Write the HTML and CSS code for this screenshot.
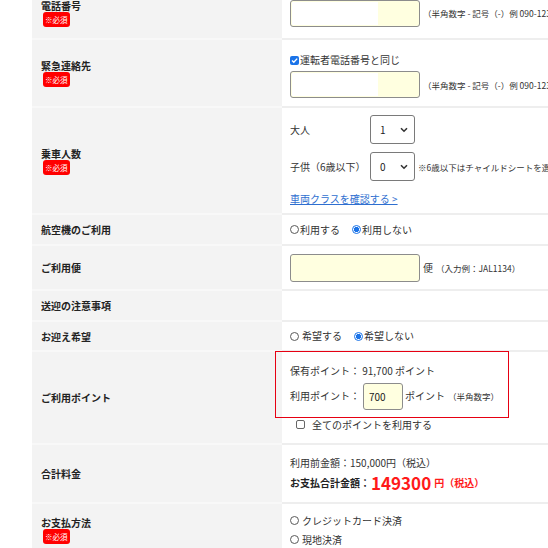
FILE: index.html
```html
<!DOCTYPE html>
<html lang="ja">
<head>
<meta charset="utf-8">
<title>予約フォーム</title>
<link rel="stylesheet" href="styles.css">
</head>
<body>
<div class="page">
  <div class="form">
    <div class="row r1">
      <div class="th"><div class="label">電話番号</div><span class="req">※必須</span></div>
      <div class="td">
        <div class="line"><span class="input tel"><span class="mask"></span></span><span class="hint">（半角数字 - 記号（-）例 090-1234-5678）</span></div>
      </div>
    </div>
    <div class="row r2">
      <div class="th"><div class="label">緊急連絡先</div><span class="req">※必須</span></div>
      <div class="td pad-top">
        <div class="line"><span class="check on"></span><span>運転者電話番号と同じ</span></div>
        <div class="line gap4"><span class="input tel"><span class="mask"></span></span><span class="hint">（半角数字 - 記号（-）例 090-1234-5678）</span></div>
      </div>
    </div>
    <div class="row r3">
      <div class="th"><div class="label">乗車人数</div><span class="req">※必須</span></div>
      <div class="td">
        <div class="line"><span class="pax">大人</span><span class="select">1<svg class="chev" width="8" height="6" viewBox="0 0 8 6"><path d="M1 1.2 L4 4.2 L7 1.2" fill="none" stroke="#333" stroke-width="1.6"/></svg></span></div>
        <div class="line gap8"><span class="pax">子供（6歳以下）</span><span class="select">0<svg class="chev" width="8" height="6" viewBox="0 0 8 6"><path d="M1 1.2 L4 4.2 L7 1.2" fill="none" stroke="#333" stroke-width="1.6"/></svg></span><span class="hint tight">※6歳以下はチャイルドシートを選択してください</span></div>
        <div class="line gap11"><a class="link" href="#">車両クラスを確認する &gt;</a></div>
      </div>
    </div>
    <div class="row r4">
      <div class="th"><div class="label">航空機のご利用</div></div>
      <div class="td">
        <div class="line"><span class="radio"></span><span class="opt">利用する</span><span class="radio on"></span><span>利用しない</span></div>
      </div>
    </div>
    <div class="row r5">
      <div class="th"><div class="label">ご利用便</div></div>
      <div class="td">
        <div class="line"><span class="input flight"></span><span class="bin">便</span><span class="hint">（入力例：JAL1134）</span></div>
      </div>
    </div>
    <div class="row r6">
      <div class="th"><div class="label">送迎の注意事項</div></div>
      <div class="td"></div>
    </div>
    <div class="row r7">
      <div class="th"><div class="label">お迎え希望</div></div>
      <div class="td">
        <div class="line"><span class="radio sp"></span><span class="opt2">希望する</span><span class="radio on"></span><span>希望しない</span></div>
      </div>
    </div>
    <div class="row r8">
      <div class="th"><div class="label">ご利用ポイント</div></div>
      <div class="td">
        <div class="highlight"></div>
        <div class="line">保有ポイント： 91,700 ポイント</div>
        <div class="line gap5"><span>利用ポイント：</span><span class="input points">700</span><span class="pt">ポイント</span><span class="hint">（半角数字）</span></div>
        <div class="line gap8 indent"><span class="check"></span><span>全てのポイントを利用する</span></div>
      </div>
    </div>
    <div class="row r9">
      <div class="th"><div class="label">合計料金</div></div>
      <div class="td">
        <div class="line">利用前金額：150,000円（税込）</div>
        <div class="line total"><b>お支払合計金額：</b><span class="amount">149300</span><span class="yen">円（税込）</span></div>
      </div>
    </div>
    <div class="row r10">
      <div class="th"><div class="label">お支払方法</div><span class="req">※必須</span></div>
      <div class="td">
        <div class="line pay"><span class="radio sp"></span><span>クレジットカード決済</span></div>
        <div class="line pay"><span class="radio sp"></span><span>現地決済</span></div>
      </div>
    </div>
  </div>
</div>
</body>
</html>
```

FILE: styles.css
```css
html, body {
  margin: 0;
  padding: 0;
  background: #fff;
  overflow: hidden;
}
body {
  font-family: "Noto Sans CJK JP", "Noto Sans", sans-serif;
  font-size: 10px;
  color: #333;
}
.page {
  width: 548px;
  height: 548px;
  overflow: hidden;
}
.form {
  width: 720px;
  margin-left: 32px;
  margin-top: -12px;
}
.row {
  display: grid;
  grid-template-columns: 250px 1fr;
}
.th {
  background: #f3f3f3;
  border-bottom: 2px solid #f8f8f8;
  padding-left: 9px;
  display: flex;
  flex-direction: column;
  justify-content: center;
  align-items: flex-start;
}
.td {
  position: relative;
  border-bottom: 2px solid #eeeeee;
  padding-left: 8px;
  display: flex;
  flex-direction: column;
  justify-content: center;
}
.r1 { height: 52px; }
.r2 { height: 68px; }
.r3 { height: 107px; }
.r4 { height: 31px; }
.r5 { height: 45px; }
.r6 { height: 31px; }
.r7 { height: 30px; }
.r8 { height: 93px; }
.r9 { height: 59px; }
.r10 { height: 54px; }

.label {
  font-weight: bold;
  color: #222;
  line-height: 13px;
}
.req {
  display: inline-block;
  margin-left: 2px;
  background: #ff0000;
  color: #fff;
  font-size: 7.5px;
  line-height: 15px;
  height: 15px;
  padding: 0 2px;
  border-radius: 3px;
}
.pad-top { padding-top: 5px; }
.line {
  display: flex;
  align-items: center;
  line-height: 14px;
  white-space: nowrap;
}
.gap4 { margin-top: 4px; }
.gap5 { margin-top: 5px; }
.gap8 { margin-top: 8px; }
.gap11 { margin-top: 11px; }
.indent { padding-left: 6px; }

.input {
  display: inline-block;
  box-sizing: border-box;
  background: #ffffe0;
  border: 1px solid #8c8c8c;
  border-radius: 3px;
  position: relative;
  overflow: hidden;
}
.input.tel {
  width: 130px;
  height: 27px;
}
.mask {
  position: absolute;
  left: 1px;
  top: 1px;
  bottom: 1px;
  width: 86px;
  background: #fff;
}
.input.flight {
  width: 130px;
  height: 28px;
}
.input.points {
  width: 40px;
  height: 27px;
  margin-left: 3px;
  padding-left: 5px;
  line-height: 25px;
  color: #222;
}
.hint {
  font-size: 8.5px;
  margin-left: 3px;
  color: #333;
}
.hint.tight { margin-left: 3px; }
.bin { margin-left: 3px; }
.pt { margin-left: 2px; }

.pax {
  display: inline-block;
  width: 80px;
}
.select {
  box-sizing: border-box;
  display: inline-flex;
  align-items: center;
  justify-content: space-between;
  width: 45px;
  height: 29px;
  padding: 0 6px 0 9px;
  border: 1px solid #7a7a7a;
  border-radius: 3px;
  background: #fff;
  color: #222;
}
.chev { display: block; }
.link {
  color: #2f6fd0;
  text-decoration: underline;
}

.radio {
  box-sizing: border-box;
  display: inline-block;
  width: 9px;
  height: 9px;
  border: 1px solid #5a5a5a;
  border-radius: 50%;
  background: #fff;
  flex: none;
}
.radio.on {
  border-color: #1a73e8;
  background: radial-gradient(circle, #1a73e8 0 2.4px, #fff 2.9px);
}
.radio.sp { margin-right: 3px; }
.opt { margin-right: 12px; margin-left: 1px; }
.opt2 { margin-right: 12px; }
.r4 .radio.on, .r7 .radio.on { margin-right: 1px; }

.check {
  box-sizing: border-box;
  display: inline-block;
  width: 9px;
  height: 9px;
  border: 1px solid #666;
  border-radius: 2px;
  background: #fff;
  margin-right: 7px;
  flex: none;
}
.check.on {
  border: none;
  background: #1a73e8 url("data:image/svg+xml;utf8,<svg xmlns='http://www.w3.org/2000/svg' viewBox='0 0 9 9'><path d='M2 4.6 L3.8 6.3 L7.2 2.6' fill='none' stroke='white' stroke-width='1.4'/></svg>") center/9px 9px no-repeat;
  margin-right: 1px;
}

.highlight {
  position: absolute;
  left: -7px;
  top: -1px;
  width: 234px;
  height: 67px;
  box-sizing: border-box;
  border: 1px solid #e60012;
  pointer-events: none;
}
.total {
  margin-top: 3px;
  line-height: 19px;
}
.total b { color: #222; }
.amount {
  color: #ff1a1a;
  font-weight: bold;
  font-size: 17px;
  margin-left: 1px;
}
.yen {
  color: #ff1a1a;
  font-weight: bold;
  margin-left: 3px;
}
.pay { line-height: 19px; }
```
